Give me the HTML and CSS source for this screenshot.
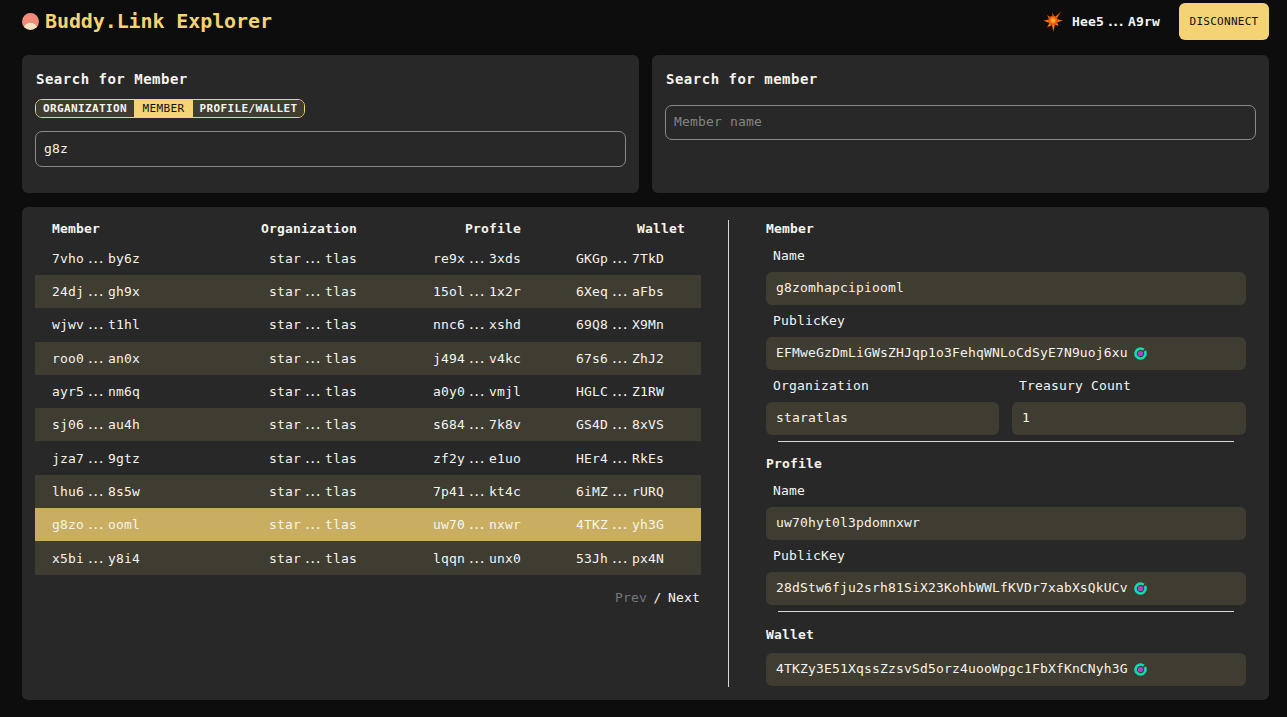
FILE: index.html
```html
<!DOCTYPE html>
<html lang="en">
<head>
  <meta charset="UTF-8">
  <title>Buddy.Link Explorer</title>
  <link rel="stylesheet" href="styles.css">
</head>
<body>
  <header class="topbar">
    <div class="brand">
      <span class="brand-dot"></span>
      <span class="brand-name">Buddy.Link Explorer</span>
    </div>
    <div class="account">
      <svg class="burst" width="20" height="22" viewBox="0 0 20 22">
        <defs>
          <radialGradient id="burst-fill">
            <stop offset="0" stop-color="#ffd83c"/>
            <stop offset="0.5" stop-color="#ff7c14"/>
            <stop offset="1" stop-color="#c8400f"/>
          </radialGradient>
        </defs>
        <path d="M10 11L9.300 2 11.500 7.500 18.500 1 13.500 9 20 10.500 14 12.500 15.500 16 12 14.500 10.300 22 9 15 4 17.500 6.500 13 0 10.500 6.500 9.500 4 5 8 7.500z" fill="url(#burst-fill)"/>
        <circle cx="10" cy="10.500" r="4.800" fill="url(#burst-fill)"/>
      </svg>
      <span class="account-name">Hee5<i class="dots">...</i>A9rw</span>
      <button class="disconnect">DISCONNECT</button>
    </div>
  </header>

  <section class="search-row">
    <div class="card search-card">
      <h2>Search for Member</h2>
      <div class="tabs">
        <span class="tab">ORGANIZATION</span>
        <span class="tab active">MEMBER</span>
        <span class="tab">PROFILE/WALLET</span>
      </div>
      <input class="text-input" type="text" value="g8z">
    </div>
    <div class="card search-card">
      <h2>Search for member</h2>
      <input class="text-input second" type="text" placeholder="Member name">
    </div>
  </section>

  <section class="card main">
    <div class="list">
      <div class="row head">
        <span>Member</span><span>Organization</span><span>Profile</span><span>Wallet</span>
      </div>
      <div class="row"><span>7vho<i class="dots">...</i>by6z</span><span>star<i class="dots">...</i>tlas</span><span>re9x<i class="dots">...</i>3xds</span><span>GKGp<i class="dots">...</i>7TkD</span></div>
      <div class="row odd"><span>24dj<i class="dots">...</i>gh9x</span><span>star<i class="dots">...</i>tlas</span><span>15ol<i class="dots">...</i>1x2r</span><span>6Xeq<i class="dots">...</i>aFbs</span></div>
      <div class="row"><span>wjwv<i class="dots">...</i>t1hl</span><span>star<i class="dots">...</i>tlas</span><span>nnc6<i class="dots">...</i>xshd</span><span>69Q8<i class="dots">...</i>X9Mn</span></div>
      <div class="row odd"><span>roo0<i class="dots">...</i>an0x</span><span>star<i class="dots">...</i>tlas</span><span>j494<i class="dots">...</i>v4kc</span><span>67s6<i class="dots">...</i>ZhJ2</span></div>
      <div class="row"><span>ayr5<i class="dots">...</i>nm6q</span><span>star<i class="dots">...</i>tlas</span><span>a0y0<i class="dots">...</i>vmjl</span><span>HGLC<i class="dots">...</i>Z1RW</span></div>
      <div class="row odd"><span>sj06<i class="dots">...</i>au4h</span><span>star<i class="dots">...</i>tlas</span><span>s684<i class="dots">...</i>7k8v</span><span>GS4D<i class="dots">...</i>8xVS</span></div>
      <div class="row"><span>jza7<i class="dots">...</i>9gtz</span><span>star<i class="dots">...</i>tlas</span><span>zf2y<i class="dots">...</i>e1uo</span><span>HEr4<i class="dots">...</i>RkEs</span></div>
      <div class="row odd"><span>lhu6<i class="dots">...</i>8s5w</span><span>star<i class="dots">...</i>tlas</span><span>7p41<i class="dots">...</i>kt4c</span><span>6iMZ<i class="dots">...</i>rURQ</span></div>
      <div class="row selected"><span>g8zo<i class="dots">...</i>ooml</span><span>star<i class="dots">...</i>tlas</span><span>uw70<i class="dots">...</i>nxwr</span><span>4TKZ<i class="dots">...</i>yh3G</span></div>
      <div class="row odd"><span>x5bi<i class="dots">...</i>y8i4</span><span>star<i class="dots">...</i>tlas</span><span>lqqn<i class="dots">...</i>unx0</span><span>53Jh<i class="dots">...</i>px4N</span></div>
      <div class="pager"><span class="dim">Prev</span> / <span>Next</span></div>
    </div>

    <div class="details">
      <h3>Member</h3>
      <div class="label">Name</div>
      <div class="value">g8zomhapcipiooml</div>
      <div class="label">PublicKey</div>
      <div class="value">EFMweGzDmLiGWsZHJqp1o3FehqWNLoCdSyE7N9uoj6xu<svg class="ring" width="13" height="13" viewBox="0 0 13 13"><path d="M9.800 2.750A5 5 0 1 0 10.830 4" fill="none" stroke="#0fdcb0" stroke-width="2.600"/><circle cx="6.500" cy="6.500" r="2.600" fill="#b23fd0"/></svg></div>
      <div class="two">
        <div><div class="label">Organization</div><div class="value">staratlas</div></div>
        <div><div class="label">Treasury Count</div><div class="value">1</div></div>
      </div>
      <hr>
      <h3>Profile</h3>
      <div class="label">Name</div>
      <div class="value">uw70hyt0l3pdomnxwr</div>
      <div class="label">PublicKey</div>
      <div class="value">28dStw6fju2srh81SiX23KohbWWLfKVDr7xabXsQkUCv<svg class="ring" width="13" height="13" viewBox="0 0 13 13"><path d="M9.800 2.750A5 5 0 1 0 10.830 4" fill="none" stroke="#0fdcb0" stroke-width="2.600"/><circle cx="6.500" cy="6.500" r="2.600" fill="#b23fd0"/></svg></div>
      <hr class="last">
      <h3 class="wallet">Wallet</h3>
      <div class="value">4TKZy3E51XqssZzsvSd5orz4uooWpgc1FbXfKnCNyh3G<svg class="ring" width="13" height="13" viewBox="0 0 13 13"><path d="M9.800 2.750A5 5 0 1 0 10.830 4" fill="none" stroke="#0fdcb0" stroke-width="2.600"/><circle cx="6.500" cy="6.500" r="2.600" fill="#b23fd0"/></svg></div>
    </div>
  </section>
</body>
</html>
```

FILE: styles.css
```css
* {
  box-sizing: border-box;
}
body {
  margin: 0;
  height: 717px;
  overflow: hidden;
  background: #0d0d0d;
  color: #f4f4ee;
  font-family: "DejaVu Sans Mono", monospace;
  font-size: 13px;
  letter-spacing: 0.17px;
}
.dots {
  display: inline-block;
  width: 24px;
  padding-right: 3px;
  font-style: normal;
  text-align: center;
  letter-spacing: -2.5px;
}
.topbar {
  display: flex;
  justify-content: space-between;
  align-items: center;
  height: 42px;
  padding: 0 18px 0 22px;
}
.brand {
  display: flex;
  align-items: center;
  gap: 6px;
}
.brand-dot {
  width: 17px;
  height: 17px;
  border-radius: 50%;
  background: radial-gradient(circle at 50% 100%, #f7e2bf 36%, #f08a7a 40%);
}
.brand-name {
  font-size: 20px;
  font-weight: bold;
  letter-spacing: -0.1px;
  color: #f5d272;
}
.account {
  display: flex;
  align-items: center;
}
.burst {
  margin-right: 9px;
}
.account-name {
  font-weight: bold;
  margin-right: 19px;
}
.disconnect {
  height: 37px;
  width: 90px;
  padding: 0;
  border: none;
  border-radius: 6px;
  background: #f4d374;
  color: #111;
  font-family: inherit;
  font-size: 11px;
  letter-spacing: 0.28px;
}
.card {
  background: #282828;
  border-radius: 6px;
}
.search-row {
  display: grid;
  grid-template-columns: 617px 617px;
  gap: 13px;
  margin: 13px 0 14px 22px;
}
.search-card {
  height: 138px;
  padding: 15px 13px;
}
h2 {
  margin: 0 0 11px 1px;
  font-size: 14px;
  line-height: 18px;
  font-weight: bold;
  letter-spacing: 0.5px;
}
.tabs {
  display: flex;
  width: fit-content;
  border: 1px solid #f4d374;
  border-radius: 7px;
  overflow: hidden;
  margin-bottom: 13px;
}
.tab {
  padding: 0 7px;
  background: #3f3c32;
  font-size: 11px;
  line-height: 17px;
  font-weight: bold;
  letter-spacing: 0.38px;
}
.tab.active {
  padding: 0 8.5px;
  background: #f4d374;
  color: #111;
  font-weight: normal;
}
.tab:last-child {
  padding: 0 6.5px;
}
.text-input {
  display: block;
  width: 100%;
  height: 36px;
  padding: 0 8px 2px;
  background: transparent;
  border: 1px solid #8a8a8a;
  border-radius: 7px;
  color: #f4f4ee;
  font-family: inherit;
  font-size: 13px;
  letter-spacing: 0.17px;
}
.text-input::placeholder {
  color: #858585;
}
.text-input.second {
  margin-top: 17px;
  height: 35px;
}
.main {
  display: flex;
  width: 1247px;
  height: 493px;
  margin-left: 22px;
  padding: 13px;
}
.list {
  width: 666px;
  flex: none;
}
/* member and organization share the first track, one left and one right */
.row {
  display: grid;
  grid-template-columns: 305px 164px 164px;
  height: 33.3px;
  align-items: center;
  padding: 0 17px;
  white-space: nowrap;
}
.row span:nth-child(1),
.row span:nth-child(2) {
  grid-row: 1;
  grid-column: 1;
}
.row span:nth-child(2),
.row span:nth-child(3),
.row span:nth-child(4) {
  text-align: right;
}
.row span:nth-child(4) {
  padding-right: 21px;
}
.row.head {
  height: 21.7px;
  padding-bottom: 4px;
  font-weight: bold;
}
.row.head span:nth-child(4) {
  padding-right: 0;
}
.row.odd {
  background: #3f3c32;
}
.row.selected {
  background: #c9ae62;
}
.pager {
  text-align: right;
  margin-top: 15px;
  padding-right: 1px;
  word-spacing: -1.5px;
}
.dim {
  color: #777;
}
.details {
  width: 518px;
  flex: none;
  margin-left: 27px;
  padding-left: 37px;
  border-left: 1px solid #d8d8d8;
}
h3 {
  margin: 0 0 10px;
  font-size: 13px;
  line-height: 18px;
  font-weight: bold;
}
h3.wallet {
  margin-bottom: 9px;
}
.label {
  margin: 8px 0;
  padding-left: 7px;
  line-height: 16px;
}
.value {
  display: flex;
  align-items: center;
  height: 33px;
  padding: 0 10px 2px;
  background: #3f3c32;
  border-radius: 6px;
}
.ring {
  margin: 2px 0 0 6px;
}
.two {
  display: grid;
  grid-template-columns: 233px 234px;
  gap: 13px;
}
hr {
  width: 456px;
  margin: 6px 0 13px 12px;
  border: none;
  border-top: 1px solid #d8d8d8;
}
hr.last {
  margin-bottom: 14px;
}
```
